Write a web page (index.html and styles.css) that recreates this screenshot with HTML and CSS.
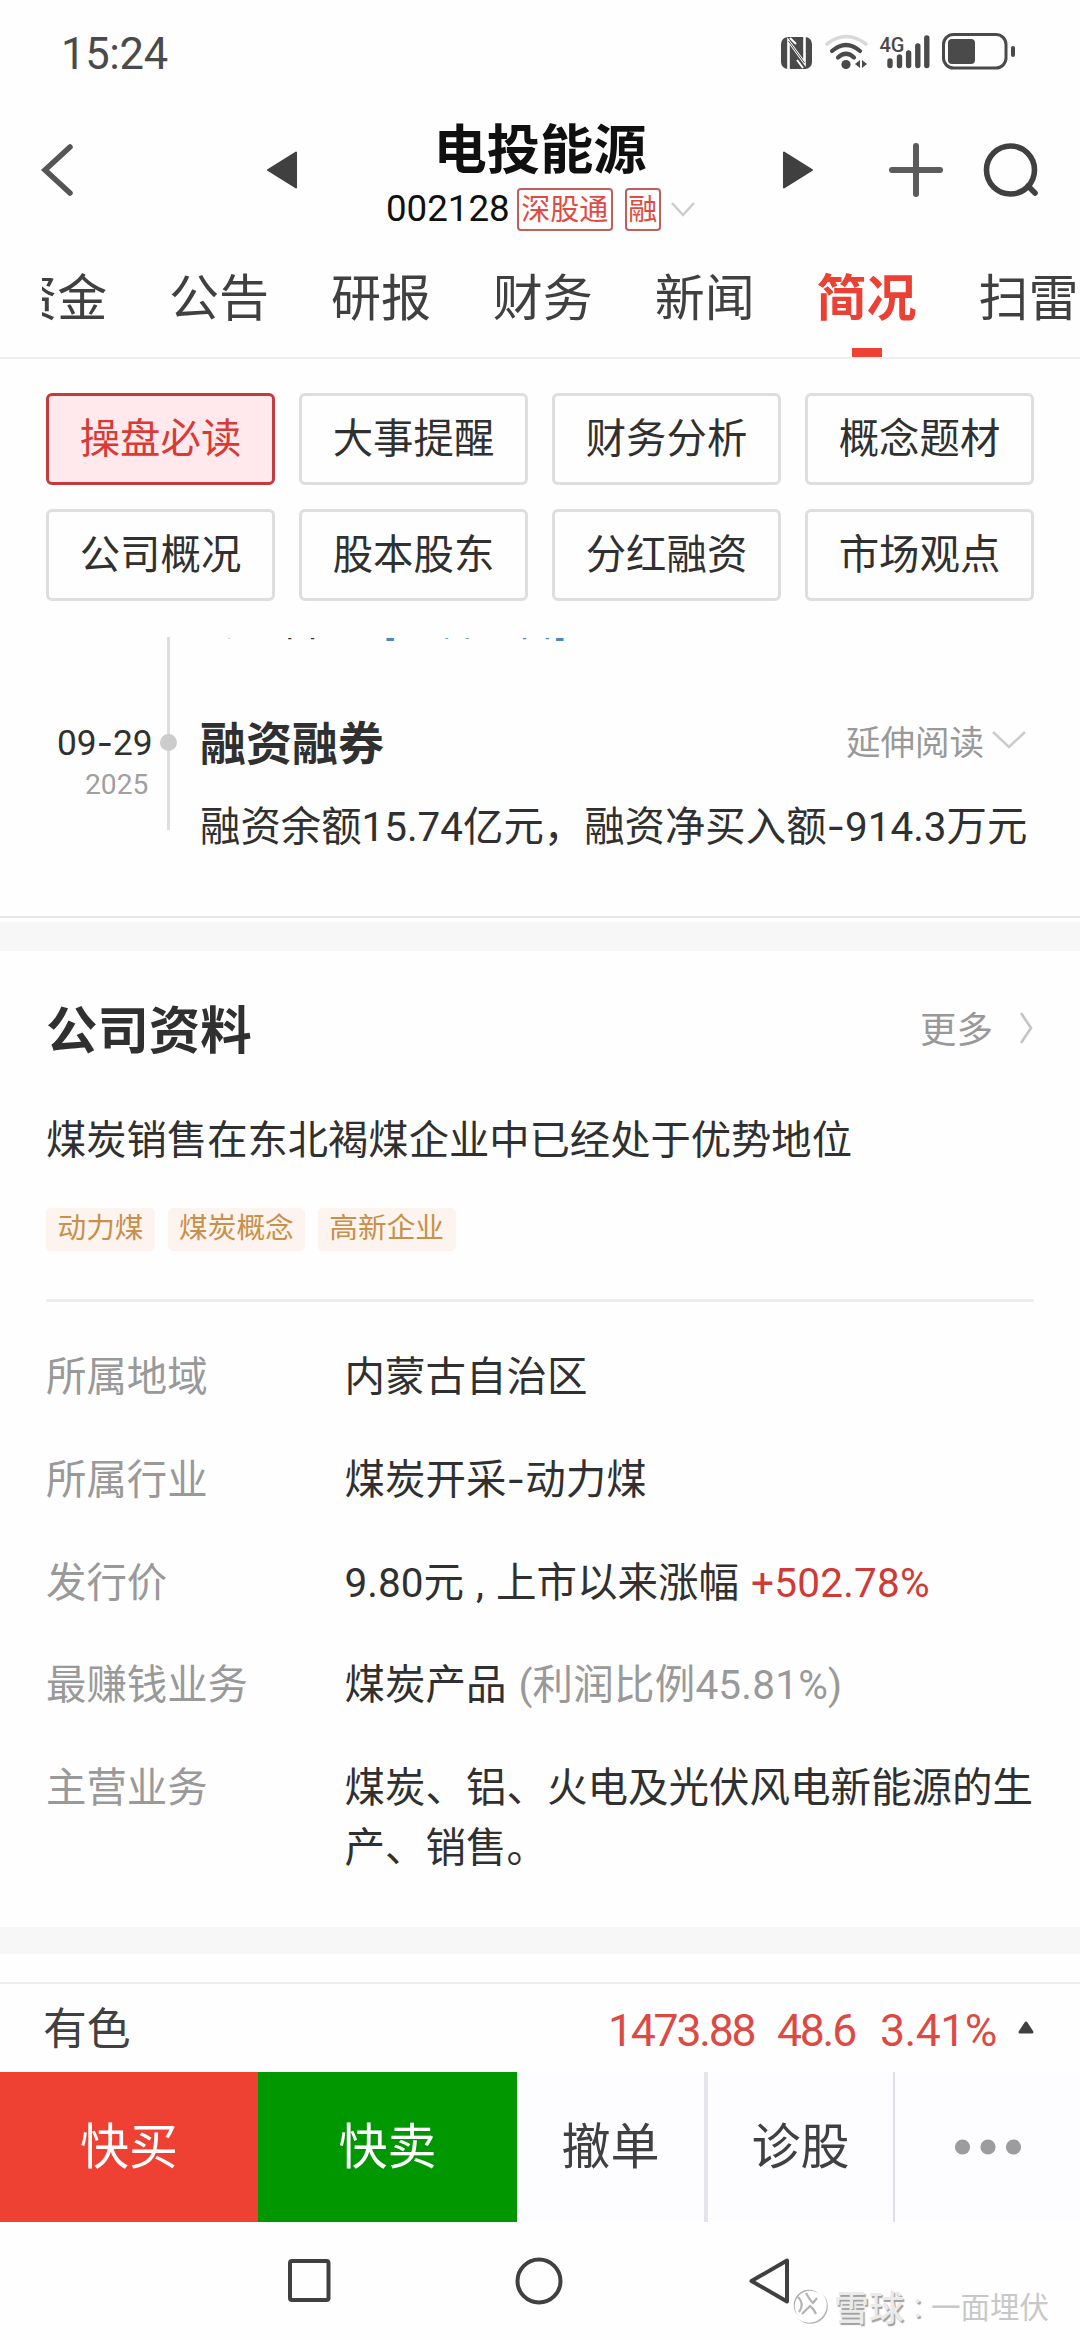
FILE: index.html
```html
<!DOCTYPE html>
<html lang="zh-CN">
<head>
<meta charset="utf-8">
<title>电投能源 002128</title>
<link rel="stylesheet" href="styles.css">
</head>
<body>
<div class="phone">
  <div class="status">
    <span class="clock">15:24</span>
    <svg class="status-icons" width="240" height="44" viewBox="778 30 240 44">
      <rect x="781" y="37" width="31" height="32" rx="7" fill="#4a4a4a"/>
      <path d="M788.500 69V41L804.500 63V37" fill="none" stroke="#fff" stroke-width="2.600"/>
      <path d="M788.500 41L804.500 63" fill="none" stroke="#4a4a4a" stroke-width="1"/>
      <path d="M790 38L796 44M797 60L803 68" fill="none" stroke="#fff" stroke-width="2"/>
      <path d="M827 44Q846 29 866 44" fill="none" stroke="#d9d9d9" stroke-width="3.600" stroke-linecap="round"/>
      <path d="M832 51Q846 39 860 51M838 57.500Q846 50 854 57.500" fill="none" stroke="#4a4a4a" stroke-width="4.200" stroke-linecap="round"/>
      <circle cx="846" cy="64.500" r="4.600" fill="#4a4a4a"/>
      <path d="M860 60v8l-5-4zM862 60v8l5-4z" fill="#4a4a4a"/>
      <text x="879.500" y="51.500" class="net">4G</text>
      <path d="M890 61V65.500M899.500 57V65.500M908.600 53V65.500M917.800 46V65.500M926.800 38V65.500" stroke="#4a4a4a" stroke-width="5.400" stroke-linecap="round"/>
      <rect x="943.500" y="34.500" width="62.500" height="33.500" rx="10" fill="none" stroke="#4a4a4a" stroke-width="3"/>
      <rect x="948" y="39" width="27" height="25" rx="4" fill="#4a4a4a"/>
      <rect x="1011" y="46" width="4" height="11" rx="2" fill="#4a4a4a"/>
    </svg>
  </div>

  <header class="head">
    <svg class="back" width="36" height="56" viewBox="0 0 36 56"><path d="M31 5L6 28L31 51" fill="none" stroke="#555" stroke-width="5.500" stroke-linecap="round"/></svg>
    <svg class="prev" width="32" height="38" viewBox="0 0 32 38"><path d="M30 1.500V36.500L2 19Z" fill="#404040" stroke="#404040" stroke-width="2" stroke-linejoin="round"/></svg>
    <div class="stock">
      <h1>电投能源</h1>
      <div class="code-row"><span class="code">002128</span><span class="chip">深股通</span><span class="chip chip-sm">融</span><svg width="26" height="18" viewBox="0 0 26 18"><path d="M2 2L13 14L24 2" fill="none" stroke="#ccc" stroke-width="2.500"/></svg></div>
    </div>
    <svg class="next" width="32" height="38" viewBox="0 0 32 38"><path d="M2 1.500V36.500L30 19Z" fill="#404040" stroke="#404040" stroke-width="2" stroke-linejoin="round"/></svg>
    <svg class="plus" width="56" height="56" viewBox="0 0 56 56"><path d="M4 28H52M28 4V52" stroke="#5c5c5c" stroke-width="6" stroke-linecap="round"/></svg>
    <svg class="search" width="58" height="58" viewBox="0 0 58 58"><circle cx="28.500" cy="29" r="24" fill="none" stroke="#404040" stroke-width="5.600"/><path d="M46 45L53 52" stroke="#404040" stroke-width="5.600" stroke-linecap="round"/></svg>
  </header>

  <nav class="tabs">
    <span>资金</span><span>公告</span><span>研报</span><span>财务</span><span>新闻</span><span class="on">简况</span><span>扫雷</span>
  </nav>

  <div class="grid">
    <span class="on">操盘必读</span><span>大事提醒</span><span>财务分析</span><span>概念题材</span>
    <span>公司概况</span><span>股本股东</span><span>分红融资</span><span>市场观点</span>
  </div>

  <section class="timeline">
    <div class="when">
      <div class="day">09<i class="dash">-</i>29</div>
      <div class="year">2025</div>
    </div>
    <div class="rail"></div>
    <div class="event">
      <div class="cut"><p>的公告。<a>[查看公告]</a></p></div>
      <div class="event-head">
        <h3>融资融券</h3>
        <span class="more">延伸阅读<svg width="36" height="20" viewBox="0 0 36 20"><path d="M2 2L18 17L34 2" fill="none" stroke="#ccc" stroke-width="2.500"/></svg></span>
      </div>
      <p class="body">融资余额15.74亿元，融资净买入额<i class="dash">-</i>914.3万元</p>
    </div>
  </section>
  <div class="band band-top"></div>

  <section class="company">
    <div class="sec-head">
      <h2>公司资料</h2>
      <span class="more">更多<svg width="16" height="34" viewBox="0 0 16 34"><path d="M3 2L13 17L3 32" fill="none" stroke="#c4c4c4" stroke-width="2.600"/></svg></span>
    </div>
    <p class="summary">煤炭销售在东北褐煤企业中已经处于优势地位</p>
    <div class="tags"><span>动力煤</span><span>煤炭概念</span><span>高新企业</span></div>
    <dl>
      <dt>所属地域</dt><dd>内蒙古自治区</dd>
      <dt>所属行业</dt><dd>煤炭开采<i class="dash">-</i>动力煤</dd>
      <dt>发行价</dt><dd>9.80元 , 上市以来涨幅 <b>+502.78%</b></dd>
      <dt>最赚钱业务</dt><dd>煤炭产品 <em>(利润比例45.81%)</em></dd>
      <dt>主营业务</dt><dd>煤炭、铝、火电及光伏风电新能源的生产、销售。</dd>
    </dl>
  </section>
  <div class="band band-bottom"></div>

  <div class="ticker">
    <span class="name">有色</span>
    <span class="num n1">1473.88</span><span class="num n2">48.6</span><span class="num n3">3.41%</span>
    <svg width="18" height="16" viewBox="0 0 18 16"><path d="M9 3L15 12H3Z" fill="#404040" stroke="#404040" stroke-width="3" stroke-linejoin="round"/></svg>
  </div>

  <div class="actions">
    <span class="buy">快买</span><span class="sell">快卖</span><span class="cell c1">撤单</span><span class="cell c2">诊股</span>
    <span class="cell"><svg width="68" height="16" viewBox="0 0 68 16"><g fill="#9c9c9c"><circle cx="8.500" cy="8" r="7.600"/><circle cx="34" cy="8" r="7.600"/><circle cx="59.500" cy="8" r="7.600"/></g></svg></span>
  </div>

  <div class="sysnav">
    <svg width="46" height="50" viewBox="0 0 46 50"><rect x="4" y="5" width="38.500" height="39" rx="2" fill="none" stroke="#404040" stroke-width="4"/></svg>
    <svg width="50" height="50" viewBox="0 0 50 50"><circle cx="25" cy="25" r="21.500" fill="none" stroke="#404040" stroke-width="4"/></svg>
    <svg width="46" height="50" viewBox="0 0 46 50"><path d="M41 4.500V45.500L5.500 25Z" fill="none" stroke="#404040" stroke-width="4" stroke-linejoin="round"/></svg>
  </div>

  <div class="watermark">
    <svg width="40" height="40" viewBox="0 0 40 40"><circle cx="19" cy="20" r="17.500" fill="#fff"/><g fill="none"><circle cx="20.300" cy="21.300" r="16.500" stroke="#b0b0b0" stroke-width="2"/><circle cx="19" cy="20" r="16.500" stroke="#fff" stroke-width="2.500"/><path d="M8 12Q15 19 9 27M16 8Q19 14 23 18L27 13M12 29L20 21Q24 24 26 29" stroke="#b4b4b4" stroke-width="2.200"/></g></svg>
    <span class="brand">雪球</span><span class="colon">:</span><span class="user">一面埋伏</span>
  </div>
</div>
</body>
</html>
```
FILE: styles.css
```css
* { box-sizing: border-box; margin: 0; padding: 0; }
body { background: #fefefe; }
i, em { font-style: normal; }
svg { display: block; flex: none; }

.phone {
  position: relative;
  width: 1080px;
  height: 2340px;
  overflow: hidden;
  display: flex;
  flex-direction: column;
  font-family: Roboto, "Noto Sans CJK SC", sans-serif;
  font-size: 40.4px;
  color: #303030;
  white-space: nowrap;
}
.phone > * { flex: none; }
.dash { font-family: Inter, sans-serif; }

.status { height: 108px; padding: 30px 62px 0 61px; display: flex; justify-content: space-between; }
.clock { font-size: 43.5px; letter-spacing: -0.300px; line-height: 50px; color: #4a4a4a; }
.net { font: 500 20px Roboto, sans-serif; fill: #4a4a4a; }

.head { height: 126px; display: flex; align-items: flex-start; padding-left: 39px; }
.back { margin-top: 34px; }
.prev { margin: 43px 0 0 191px; }
.stock { width: 484px; padding-top: 7px; }
.stock h1 { font-size: 53.300px; line-height: 72px; font-weight: 700; color: #101010; text-align: center; }
.code-row { display: flex; align-items: center; height: 43px; padding-left: 88px; margin-top: 1px; color: #101010; font-size: 36.700px; }
.code { line-height: 40px; margin-top: -2px; }
.chip { margin-left: 7px; height: 43px; width: 96px; border: 2px solid #c0605c; border-radius: 4px; color: #e04a42; font-size: 29px; line-height: 41px; text-align: center; }
.chip-sm { margin-left: 12px; margin-right: 9px; width: 36px; display: flex; justify-content: center; }
.next { margin-top: 43px; }
.plus { margin: 34px 0 0 74px; }
.search { margin: 33px 0 0 38px; }

.tabs { height: 124px; margin-left: 42px; display: flex; justify-content: flex-end; overflow: hidden; font-size: 50px; line-height: 130px; color: #404040; gap: 61.900px; padding-right: 1.500px; }
.tabs .on { position: relative; height: 124px; color: #eb4034; font-weight: 700; }
.tabs .on::after { content: ""; position: absolute; left: 35px; bottom: 1px; width: 30px; height: 9px; background: #ee4035; }

.grid { border-top: 2px solid #eee; padding: 34px 46px 0; margin-top: -1px; height: 280px; display: grid; grid-template-columns: repeat(4, 229px); grid-auto-rows: 92px; gap: 24px; }
.grid span { border: 3px solid #dedede; border-radius: 6px; text-align: center; line-height: 87px; }
.grid .on { border-color: #c23b3f; background: #ffe9ed; color: #d93a36; }

.timeline { display: flex; height: 279px; padding-left: 46px; }
.when { width: 121px; padding-top: 85px; }
.day { font-size: 35.300px; line-height: 42px; padding-left: 11px; }
.year { font-size: 28.200px; line-height: 40px; margin-top: 1px; padding-left: 39px; color: #a0a0a0; }
.rail { position: relative; width: 3px; height: 193px; background: #dedede; }
.rail::after { content: ""; position: absolute; left: -7px; top: 97px; width: 17px; height: 17px; border-radius: 50%; background: #ccc; }
.event { margin-left: 30px; width: 827px; }
.cut { height: 4px; margin-top: 1px; overflow: hidden; display: flex; align-items: flex-end; }
.cut p { line-height: 54px; margin-bottom: -7px; }
.cut a { color: #4a88c0; margin-left: 22px; }
.event-head { display: flex; justify-content: space-between; align-items: center; height: 60px; margin-top: 68px; }
.event-head h3 { font-size: 46px; font-weight: 700; }
.more { display: flex; align-items: center; font-size: 34.500px; color: #999; gap: 7px; }
.body { line-height: 60px; margin-top: 27px; }

.band { background: #f7f7f7; }
.band-top { height: 35px; border-top: 2px solid #e8e8e8; box-shadow: inset 0 4px #fefefe; }
.band-bottom { height: 27px; margin-bottom: 28px; }

.company { height: 976px; padding: 0 46px; }
.sec-head { display: flex; justify-content: space-between; align-items: center; height: 80px; margin-top: 35px; }
.sec-head h2 { font-size: 51.400px; font-weight: 700; }
.sec-head .more { font-size: 36.500px; gap: 25px; padding-top: 3px; }
.summary { line-height: 60px; margin-top: 45px; font-size: 40.300px; }
.tags { display: flex; gap: 12.500px; padding-bottom: 48px; margin-top: 37px; border-bottom: 3px solid #ededed; }
.tags span { height: 43px; padding: 0 11.500px; border-radius: 5px; background: #fdf3ef; color: #c8904a; font-size: 28.700px; line-height: 40px; }
dl { display: grid; grid-template-columns: 298.500px 1fr; row-gap: 42.600px; margin-top: 46px; line-height: 60.200px; }
dt { color: #999; }
dd { width: 691px; white-space: normal; word-spacing: 2px; font-size: 40.500px; margin-top: -1px; }
dd b { font-weight: 400; color: #d03a36; letter-spacing: 0.200px; }
dd em { color: #999; letter-spacing: 0.200px; }

.ticker { height: 90px; border-top: 2px solid #eee; display: flex; align-items: center; padding-left: 43px; }
.name { font-size: 43.800px; color: #404040; width: 565px; margin-top: -5px; }
.num { font-size: 44.500px; letter-spacing: -2.200px; color: #dc4a44; padding-top: 6px; }
.n1 { width: 169px; }
.n2 { width: 103px; }
.n3 { width: 137px; letter-spacing: -0.500px; }

.actions { height: 150px; display: flex; font-size: 49px; line-height: 151px; background: #fdfcfe; color: #404040; text-align: center; }
.buy { width: 258px; background: #ee4033; color: #fff; }
.sell { width: 259px; background: #009700; color: #fff; }
.cell { flex: 1; }
.c1 { flex: 0 0 191px; border-right: 4px solid #e4e4ee; }
.c2 { flex: 0 0 187px; border-right: 2px solid #e0e0e8; }
.cell svg { margin: 67px auto 0; }

.sysnav { height: 118px; padding: 34px 288px 0 286px; display: flex; justify-content: space-between; }

.watermark { position: absolute; left: 790px; top: 2285px; display: flex; align-items: center; height: 40px; }
.brand { margin-left: 4px; font-size: 35px; font-weight: 500; color: #eaeaea; text-shadow: 1.500px 1.500px 1px #a0a0a0; }
.colon { width: 27px; text-align: center; font-size: 34px; color: #eaeaea; text-shadow: 1.500px 1.500px 1px #a0a0a0; }
.user { font-size: 29.500px; color: #c8c8c8; }
```
